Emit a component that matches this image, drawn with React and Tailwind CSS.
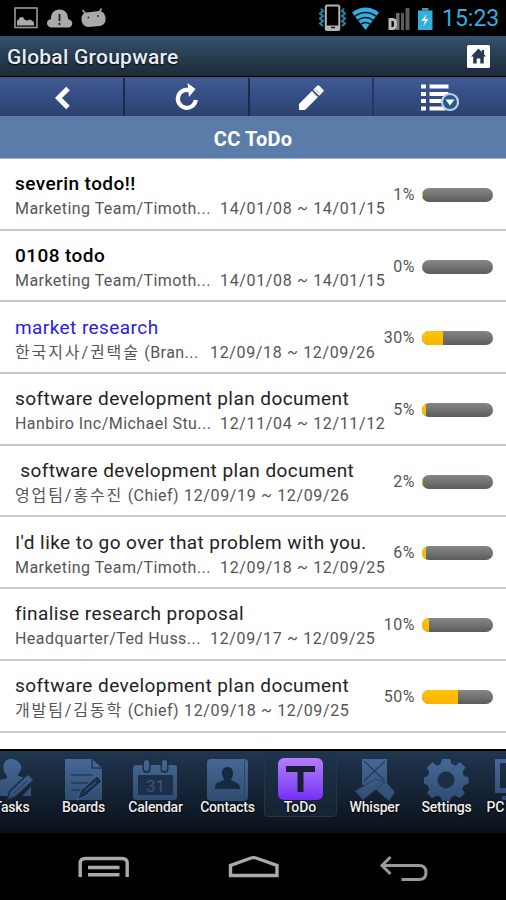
import React from 'react';

const todos = [
	{ title: "severin todo!!", bold: true, owner: "Marketing Team/Timoth...", ownerWidth: "w-[206px]", date: "14/01/08 ~ 14/01/15", percent: 1 },
	{ title: "0108 todo", bold: true, owner: "Marketing Team/Timoth...", ownerWidth: "w-[206px]", date: "14/01/08 ~ 14/01/15", percent: 0 },
	{ title: "market research", blue: true, team: "한국지사/권택술", owner: " (Bran...", ownerWidth: "w-[196px]", date: "12/09/18 ~ 12/09/26", percent: 30 },
	{ title: "software development plan document", owner: "Hanbiro Inc/Michael Stu...", ownerWidth: "w-[206px]", date: "12/11/04 ~ 12/11/12", percent: 5 },
	{ title: " software development plan document", team: "영업팀/홍수진", owner: " (Chief)", ownerWidth: "w-[170px]", date: "12/09/19 ~ 12/09/26", percent: 2 },
	{ title: "I'd like to go over that problem with you.", owner: "Marketing Team/Timoth...", ownerWidth: "w-[206px]", date: "12/09/18 ~ 12/09/25", percent: 6 },
	{ title: "finalise research proposal", owner: "Headquarter/Ted Huss...", ownerWidth: "w-[196px]", date: "12/09/17 ~ 12/09/25", percent: 10 },
	{ title: "software development plan document", team: "개발팀/김동학", owner: " (Chief)", ownerWidth: "w-[170px]", date: "12/09/18 ~ 12/09/25", percent: 50 },
];

const StatusBar = () => (
	<div className="h-9 shrink-0 bg-black flex items-center">
		<svg className="w-[110px] h-9" viewBox="0 0 110 36">
			<rect x="15" y="8" width="22" height="19.5" fill="none" stroke="#999" strokeWidth="1.6" />
			<path d="M17 25.500v-4q0-2 2-2 0-2.500 2.500-2.500t3 2.500q2.500 1.500 4 .5 2.500-1.500 3.500 1 2 0 2 2v2.500z" fill="#aaa" />
			<path d="M52 27.500c-6 0-7-7.500-1-8.500 0-6 3-9.500 8.500-9.500s8.500 3.500 8.500 9.500c6 1 5.500 8.500 0 8.500z" fill="#aaa" />
			<path d="M59.500 14v7M59.500 22.800v2.200" stroke="#222" strokeWidth="1.800" />
			<path d="M87 12.500l12-1.500c4 0 6 3 6.500 7s-1.500 7.500-6 8l-11 1c-4 0-6.500-3-7-7s1.500-7 5.500-7.500z" fill="#aaa" />
			<path d="M82.500 10l3.500 4M101.500 8.500l-2.500 4" stroke="#aaa" strokeWidth="1.500" />
			<circle cx="88.500" cy="17.500" r="1" fill="#333" />
			<circle cx="98" cy="16" r="1" fill="#333" />
		</svg>
		<svg className="w-[120px] h-9 ml-auto" viewBox="318 0 120 36">
			<path d="M321 8.500l2 2.500-3 2.500 3 2.500-3 2.500 3 2.500-3 2.500 3 2.500M344 8.500l-2 2.500 3 2.500-3 2.500 3 2.500-3 2.500 3 2.500-3 2.500" fill="none" stroke="#2589a6" strokeWidth="2" />
			<rect x="325.800" y="5.500" width="13.500" height="24.500" rx="1.500" fill="#000" stroke="#b5b5b5" strokeWidth="2" />
			<path d="M326 27.500h13" stroke="#b5b5b5" strokeWidth="4" />
			<path d="M331 27.500h4" stroke="#222" strokeWidth="1.500" />
			<path d="M352 12.500q13.500-10 27 0L365.500 30z" fill="#33aede" />
			<g fill="none" stroke="#06141b" strokeWidth="1.300">
				<path d="M354.500 16.500q11-8 22 0" />
				<path d="M357.500 20.500q8-6 16 0" />
				<path d="M360.500 24.500q5-4 10 0" />
			</g>
			<path d="M401 30V13h3v17zM405.500 30V8h4v22z" fill="#5c5c5c" />
			<path d="M396 13h3.500v17H396z" fill="#707070" />
			<path d="M390 28.500v-9h3q2.500 0 2.500 4.500t-2.500 4.500z" fill="none" stroke="#bbb" strokeWidth="3" />
			<rect x="418" y="10.500" width="14.500" height="19.500" fill="#33aede" />
			<rect x="422" y="8" width="6.500" height="2.500" fill="#718b92" />
			<path d="M426.500 14l-5 7h3.500l-1.500 5 5-7H425z" fill="#fff" />
		</svg>
		<span className="w-[68px] pl-1 pt-[2px] text-[23px] leading-9 text-[#33aede] whitespace-nowrap">15:23</span>
	</div>
);

const Header = () => (
	<div className="h-[41px] shrink-0 flex items-center justify-between pl-[7px] pr-4 bg-linear-to-b from-[#34516e] to-[#1c2b38] border-b border-black">
		<h1 className="pt-[3px] text-[21px] leading-[37px] font-medium text-[#e6ecf5] tracking-[0.25px] [text-shadow:0_1px_2px_#000]">Global Groupware</h1>
		<svg className="w-[23px] h-[23px]" viewBox="0 0 23 23">
			<rect width="23" height="23" rx="1.500" fill="#fff" />
			<path d="M11.500 3.500L4 11.500h2.200v7h3.500v-5h3.600v5h3.500v-7H19l-2-2.200V5h-2.200v2z" fill="#263b52" />
		</svg>
	</div>
);

const Toolbar = () => (
	<div className="h-[39px] shrink-0 flex bg-linear-to-b from-[#405b91] via-[#344d84] to-[#2d426f] border-t border-[#3e5078]">
		<button className="w-[125px] pt-[1px] flex items-center justify-center border-r-2 border-[#1e2a49]">
			<svg className="w-6 h-6" viewBox="0 0 24 24">
				<path d="M18 2.500L8.500 12l9.500 9.500" fill="none" stroke="#fff" strokeWidth="5" />
			</svg>
		</button>
		<button className="w-[125px] flex items-center justify-center border-r-2 border-[#1e2a49]">
			<svg className="w-7 h-7" viewBox="0 0 28 28">
				<path d="M16.500 7.200A9 9 0 1 0 22.800 17" fill="none" stroke="#fff" strokeWidth="4.200" />
				<path d="M14.500 0l8 6-6.500 8z" fill="#fff" />
			</svg>
		</button>
		<button className="w-[124px] pt-[1px] flex items-center justify-center border-r-2 border-[#253763]">
			<svg className="w-[26px] h-[26px]" viewBox="0 0 26 26">
				<path d="M1 25v-6L14 6l6 6L7 25z" fill="#fff" />
				<path d="M15.200 4.800l4-4q1-1 2 0l4 4q1 1 0 2l-4 4z" fill="#fff" />
				<path d="M15.500 8l3 3M17.500 4.500l4 4" stroke="#7185b5" strokeWidth=".8" />
			</svg>
		</button>
		<button className="flex-1 pt-[1px] flex items-center justify-center">
			<svg className="w-[38px] h-[28px]" viewBox="0 0 38 28">
				<path d="M0 2.500h5M0 10h5M0 17h5M0 24.500h5" stroke="#fff" strokeWidth="4.200" />
				<path d="M8.500 2.500h19M8.500 10h19M8.500 17h16M8.500 24.500h16" stroke="#fff" strokeWidth="4.200" />
				<circle cx="29" cy="18" r="8" fill="#205b91" stroke="#b9cee1" strokeWidth="2.200" />
				<path d="M24.500 15.500h9L29 21.500z" fill="#fff" />
			</svg>
		</button>
	</div>
);

const TodoRow = ({ todo }) => (
	<li className="h-[71.7px] flex items-center pl-[15px] pr-[13px] pt-[2px] border-b-2 border-[#cacaca] bg-white">
		<div className="flex-1 min-w-0 pt-1">
			<div className={`text-[19px] leading-6 whitespace-pre tracking-[0.43px] ${todo.bold ? "font-medium text-black" : todo.blue ? "text-[#2a20e8]" : "text-[#222]"}`}>
				{todo.title}
			</div>
			<div className="flex text-[16px] leading-[25px] text-[#555] whitespace-nowrap">
				<span className={`shrink-0 whitespace-pre tracking-[0.45px] ${todo.ownerWidth}`}>
					{todo.team && <span className="tracking-[1.9px]">{todo.team}</span>}
					{todo.owner}
				</span>
				<span className="-ml-px tracking-[0.65px]">{todo.date}</span>
			</div>
		</div>
		<span className="text-[16px] text-[#555] tracking-[0.5px] mr-[7px]">{todo.percent}%</span>
		<div className="w-[71px] h-[14px] rounded-full overflow-hidden bg-linear-to-b from-[#858885] to-[#5b5d5b]">
			<div className="h-full bg-linear-to-b from-[#ffc400] to-[#fdb400]" style={{ width: `${todo.percent}%` }} />
		</div>
	</li>
);

const icons = {
	Tasks: (
		<>
			<path d="M22 1c-5 0-8 4-7.500 9 .3 4 2 6 3.500 8v2l-11 3q-3 1-3 5v10h15l4-8 16-9-5-2-5-1v-2c2-2 3-4 3.500-7C31 4 27 1 22 1z" />
			<path d="M42 29v9h-9z" />
			<path d="M18 42l3-9 18-17 6 6-19 17z" stroke="#1b2c42" strokeWidth="1.500" />
			<path d="M25 35l13-12" stroke="#233b5b" />
		</>
	),
	Boards: (
		<>
			<path d="M4 1h27l10 9v32H4z" />
			<path d="M31 1v9h10M10 17h22M10 25h18M10 32h11" fill="none" stroke="#233b5b" strokeWidth="1.500" />
			<path d="M16 42l4-10 16-14 5 5-16 15z" fill="#1c2e46" stroke="#42679b" />
			<path d="M24 33l11-9" stroke="#42679b" />
		</>
	),
	Calendar: (
		<>
			<path d="M4 7h37q3 0 3 3v29q0 3-3 3H3q-3 0-3-3V10q0-3 4-3z" />
			<rect x="5" y="17" width="35" height="20" rx="1" fill="#1c3149" />
			<rect x="9.500" y="1" width="8" height="14" rx="4" fill="#1c3149" />
			<rect x="27.500" y="1" width="8" height="14" rx="4" fill="#1c3149" />
			<rect x="11" y="2" width="5" height="11" rx="2.500" />
			<rect x="29" y="2" width="5" height="11" rx="2.500" />
			<text x="22.500" y="34" textAnchor="middle" fontSize="17">31</text>
		</>
	),
	Contacts: (
		<>
			<rect x="2" y="1" width="41" height="42" rx="4" />
			<path d="M39.500 2v40" stroke="#2c4669" />
			<path d="M22.500 9c-4 0-6 3-5.500 7 .3 3 2 4 2 6l-7 3q-2 1-2 6h25q0-5-3-6l-6-3c0-2 2-3 2-6 .5-4-1.500-7-5.500-7z" fill="#172940" />
		</>
	),
	Whisper: (
		<>
			<path d="M10 1h25v26H10z" />
			<path d="M12 3l21 20M33 3L12 23" fill="none" stroke="#243a55" strokeWidth="1.200" />
			<path d="M13 22l24 21 6-9-12-12z" />
			<path d="M32 22l9 10-6 9L22 29z" />
			<path d="M24 21L3 33l8 9 22-18z" stroke="#243a55" strokeWidth=".8" />
		</>
	),
	Settings: (
		<>
			<path d="M18 1h8l1.500 5 4 1.700L36 4l5.500 5.500-3 4.700 1.500 4 4.500 1v6.500l-4.600 1.600-1.800 4L41 35l-5 5-5-2.500-3.500 1.500-1.500 4h-8l-1.500-4-3.500-1.500L8 40l-5-5 2.400-3.700-1.800-4L0 25.700v-6.500l3.600-1 1.700-4L3 9.500 8.500 4l4.500 3.700L16.500 6z" />
			<circle cx="22" cy="22" r="8.500" fill="#1d2f44" />
		</>
	),
	PC: <path d="M3 1h40v34H3zM8 5v25h32V5zM10 38h24v4H10z" fillRule="evenodd" />,
};

const Tab = ({ name, className = "w-[72px]" }) => (
	<div className={`shrink-0 pt-[7px] flex flex-col items-center ${className}`}>
		<svg className="w-[45px] h-[44px]" viewBox="0 0 45 44" fill="url(#tabFill)">
			{icons[name]}
		</svg>
		<span className="-mt-[3px] relative text-[14px] leading-4 font-medium text-[#eee] tracking-[-0.2px] [text-shadow:0_1px_1px_#000,0_0_2px_#000]">{name}</span>
	</div>
);

const TabBar = () => (
	<div className="h-[84px] shrink-0 overflow-hidden border-t-2 border-black bg-linear-to-b from-[#203650] to-[#0b111a]">
		<svg className="absolute w-0 h-0">
			<linearGradient id="tabFill" gradientUnits="userSpaceOnUse" x1="0" y1="0" x2="0" y2="44">
				<stop offset="0" stopColor="#456998" />
				<stop offset="1" stopColor="#304b6f" />
			</linearGradient>
		</svg>
		<div className="flex -ml-[24.500px]">
			<Tab name="Tasks" />
			<Tab name="Boards" />
			<Tab name="Calendar" />
			<Tab name="Contacts" />
			<div className="w-[73px] h-[66px] shrink-0 pt-[6px] mr-[2px] flex flex-col items-center rounded border border-[#22364b] bg-[#1d3349]/40">
				<div className="w-[45px] h-[42px] rounded-[6px] flex items-center justify-center bg-linear-to-b from-[#b77bff] to-[#762cf4]">
					<svg className="w-[29px] h-[26px]" viewBox="0 0 29 26">
						<path d="M0 0h29v6H17.500v20h-6V6H0z" fill="#191f35" />
					</svg>
				</div>
				<span className="-mt-px text-[14px] leading-4 font-medium text-[#eee] [text-shadow:0_1px_1px_#000,0_0_2px_#000]">ToDo</span>
			</div>
			<Tab name="Whisper" />
			<Tab name="Settings" />
			<div className="w-[48px] shrink-0 pt-[7px] pl-[4px] flex flex-col">
				<svg className="w-[45px] h-[44px] ml-[5px]" viewBox="0 0 45 44" fill="url(#tabFill)">
					{icons.PC}
				</svg>
				<span className="-mt-[3px] text-[14px] leading-4 font-medium text-[#eee] tracking-[-0.2px] [text-shadow:0_1px_1px_#000,0_0_2px_#000]">PC</span>
			</div>
		</div>
	</div>
);

const NavBar = () => (
	<div className="h-[67px] shrink-0 bg-black">
		<svg className="w-full h-full" viewBox="0 833 506 67" fill="none" stroke="#aaa" strokeWidth="3.400">
			<path d="M80.200 877v-13.500q0-5 5-5h37q5 0 5 5V877M88 867.500h31.500M88 874.800h31.500" />
			<path d="M230.500 875.500v-10l20.500-7.500q2.500-.8 5 0l21 7.500v10z" />
			<path d="M390.500 857l-8.500 8.500 8.500 8.500M382 865.500h37q7 0 7 7t-7 7h-17.500" stroke="#999" strokeWidth="3" />
		</svg>
	</div>
);

const App = () => {
	return (
		<div className="w-[506px] h-[900px] overflow-hidden flex flex-col bg-white font-[Roboto,'Noto_Sans_CJK_KR',sans-serif]">
			<StatusBar />
			<Header />
			<Toolbar />
			<div className="h-[43px] shrink-0 flex items-center justify-center bg-[#5b7ca8] border-b border-[#9eb7d4]">
				<h2 className="text-[20px] font-bold text-white tracking-[0.2px] pt-[3px]">CC ToDo</h2>
			</div>
			<ul className="h-[590px] shrink-0 overflow-hidden">
				{todos.map((todo, index) => (
					<TodoRow key={index} todo={todo} />
				))}
			</ul>
			<TabBar />
			<NavBar />
		</div>
	);
};

export default App;
